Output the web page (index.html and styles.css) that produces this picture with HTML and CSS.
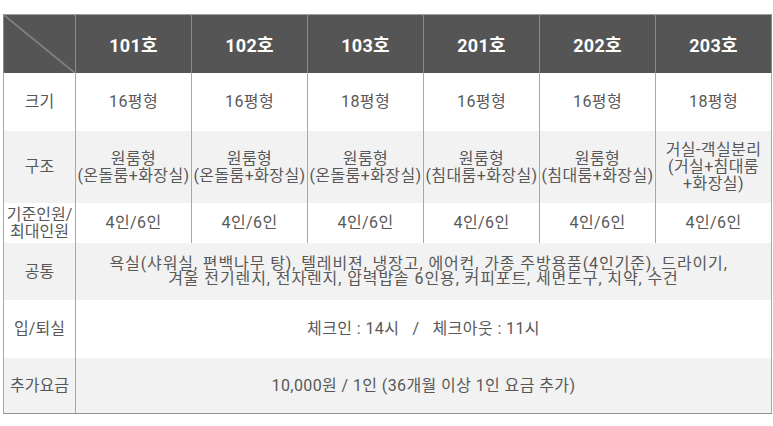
FILE: index.html
```html
<!DOCTYPE html>
<html lang="ko">
<head>
<meta charset="utf-8">
<link rel="stylesheet" href="styles.css">
</head>
<body>
<div class="wrap">
<table class="rooms">
  <colgroup>
    <col class="c-label">
    <col class="c-room"><col class="c-room"><col class="c-room">
    <col class="c-room"><col class="c-room"><col class="c-room">
  </colgroup>
  <thead>
    <tr class="r-head">
      <th class="corner"></th>
      <th>101호</th><th>102호</th><th>103호</th><th>201호</th><th>202호</th><th>203호</th>
    </tr>
  </thead>
  <tbody>
    <tr class="r-size">
      <td class="label">크기</td>
      <td>16평형</td><td>16평형</td><td>18평형</td><td>16평형</td><td>16평형</td><td>18평형</td>
    </tr>
    <tr class="r-struct alt">
      <td class="label">구조</td>
      <td class="multi">원룸형<br>(온돌룸+화장실)</td>
      <td class="multi">원룸형<br>(온돌룸+화장실)</td>
      <td class="multi">원룸형<br>(온돌룸+화장실)</td>
      <td class="multi">원룸형<br>(침대룸+화장실)</td>
      <td class="multi">원룸형<br>(침대룸+화장실)</td>
      <td class="multi">거실-객실분리<br>(거실+침대룸<br>+화장실)</td>
    </tr>
    <tr class="r-cap">
      <td class="label multi">기준인원/<br>최대인원</td>
      <td>4인/6인</td><td>4인/6인</td><td>4인/6인</td><td>4인/6인</td><td>4인/6인</td><td>4인/6인</td>
    </tr>
    <tr class="r-common alt">
      <td class="label">공통</td>
      <td colspan="6" class="tight">욕실(샤워실, 편백나무 탕), 텔레비젼, 냉장고, 에어컨, 가종 주방용품(4인기준), 드라이기,&nbsp;&nbsp;<br>겨울 전기렌지, 전자렌지, 압력밥솥 6인용, 커피포트, 세면도구, 치약, 수건</td>
    </tr>
    <tr class="r-check">
      <td class="label">입/퇴실</td>
      <td colspan="6">체크인 : 14시 &nbsp; / &nbsp; 체크아웃 : 11시</td>
    </tr>
    <tr class="r-extra alt">
      <td class="label">추가요금</td>
      <td colspan="6">10,000원 / 1인 (36개월 이상 1인 요금 추가)</td>
    </tr>
  </tbody>
</table>
</div>
</body>
</html>
```

FILE: styles.css
```css
html, body {
  margin: 0;
  padding: 0;
  background: #ffffff;
}

.wrap {
  padding: 14px 0 0 3px;
}

.rooms {
  border-collapse: collapse;
  table-layout: fixed;
  width: 769px;
  font-family: "Roboto", "Noto Sans CJK KR", sans-serif;
  color: #585858;
  border: 1px solid #a0a0a0;
}

.c-label { width: 72px; }
.c-room { width: 116px; }

.rooms th,
.rooms td {
  padding: 0;
  text-align: center;
  vertical-align: middle;
  border-left: 1px solid #a8a8a8;
  border-right: 1px solid #a8a8a8;
  white-space: nowrap;
  overflow: visible;
}

.rooms th {
  background: #555555;
  color: #ffffff;
  font-size: 18px;
  font-weight: 700;
  letter-spacing: 0.3px;
  border-left-color: #8a8a8a;
  border-right-color: #8a8a8a;
}

.corner {
  background: linear-gradient(to top right,
    transparent calc(50% - 0.8px),
    #b4b4b4 50%,
    transparent calc(50% + 0.8px)) #555555 !important;
}

.rooms td {
  font-size: 16px;
  letter-spacing: 0.4px;
  line-height: 17px;
  background: #ffffff;
}

.rooms td.label {
  letter-spacing: 0;
}

.rooms tr.alt td {
  background: #f2f2f2;
}

.rooms td.multi { line-height: 17px; }
.rooms td.tight { line-height: 15px; letter-spacing: 0.9px; }

.r-head { height: 58px; }
.r-size { height: 58px; }
.r-struct { height: 72px; }
.r-cap { height: 40px; }
.r-common { height: 57px; }
.r-check { height: 58px; }
.r-extra { height: 56px; }

.rooms tbody tr:last-child td {
  border-bottom: 1px solid #909090;
}
```
